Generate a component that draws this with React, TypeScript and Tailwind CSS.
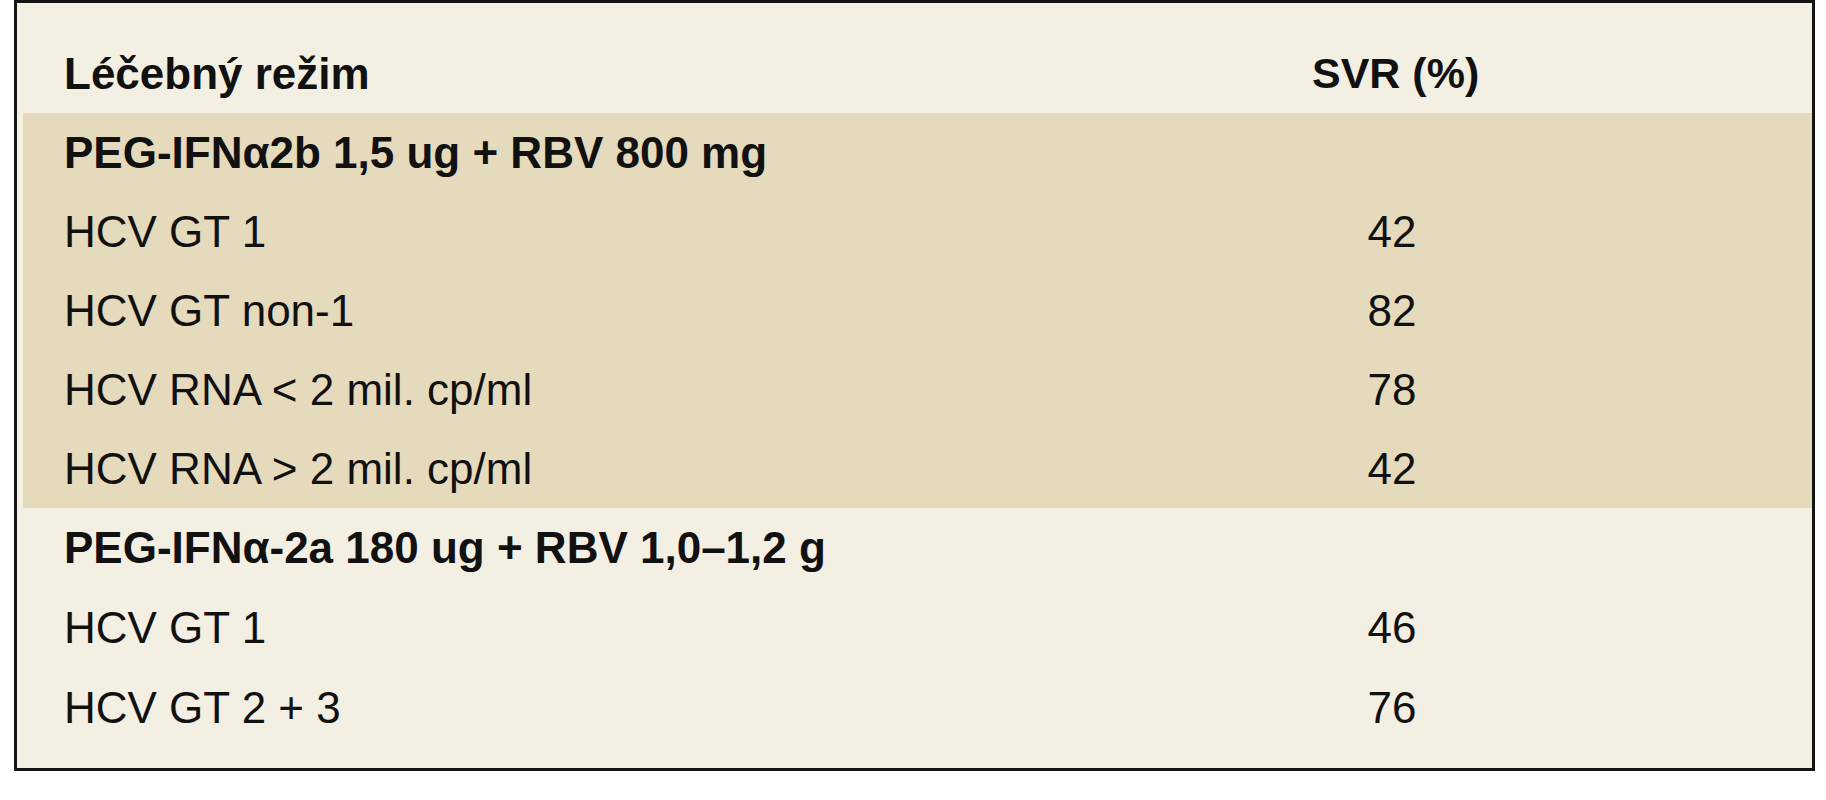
import React from 'react';

interface Row {
  label: string;
  value?: string;
  bold?: boolean;
}

const peg2b: Row[] = [
  { label: 'PEG-IFNα2b 1,5 ug + RBV 800 mg', bold: true },
  { label: 'HCV GT 1', value: '42' },
  { label: 'HCV GT non-1', value: '82' },
  { label: 'HCV RNA < 2 mil. cp/ml', value: '78' },
  { label: 'HCV RNA > 2 mil. cp/ml', value: '42' },
];

const peg2a: Row[] = [
  { label: 'PEG-IFNα-2a 180 ug + RBV 1,0–1,2 g', bold: true },
  { label: 'HCV GT 1', value: '46' },
  { label: 'HCV GT 2 + 3', value: '76' },
];

function TableRow({ row, height }: { row: Row; height: string }) {
  return (
    <div className={`flex ${height} items-center`}>
      <div className={`w-[1248px] shrink-0 whitespace-nowrap ${row.bold ? 'font-bold' : 'font-normal'}`}>
        {row.label}
      </div>
      <div className="w-[160px] text-center">{row.value}</div>
    </div>
  );
}

export default function App() {
  return (
    <div className="min-h-[800px] bg-white pl-[14px] font-['Liberation_Sans',Arial,sans-serif] text-[44px] text-[#111]">
      <div className="w-[1801px] border-[3px] border-[#141414] bg-[#f4efe3] pb-[20px]">
        {/* header */}
        <div className="flex h-[110px] pt-[31px] pl-[47px] font-bold leading-[79px]">
          <div className="w-[1248px] shrink-0">Léčebný režim</div>
          <div className="w-[160px] whitespace-nowrap text-[43px]">SVR (%)</div>
        </div>

        {/* PEG-IFNα2b group */}
        <div className="ml-[6px] bg-[#e6dabc] pl-[41px]">
          {peg2b.map((row, i) => (
            <TableRow key={i} row={row} height="h-[79px]" />
          ))}
        </div>

        {/* PEG-IFNα-2a group */}
        <div className="pl-[47px]">
          {peg2a.map((row, i) => (
            <TableRow key={i} row={row} height="h-[80px]" />
          ))}
        </div>
      </div>
    </div>
  );
}
